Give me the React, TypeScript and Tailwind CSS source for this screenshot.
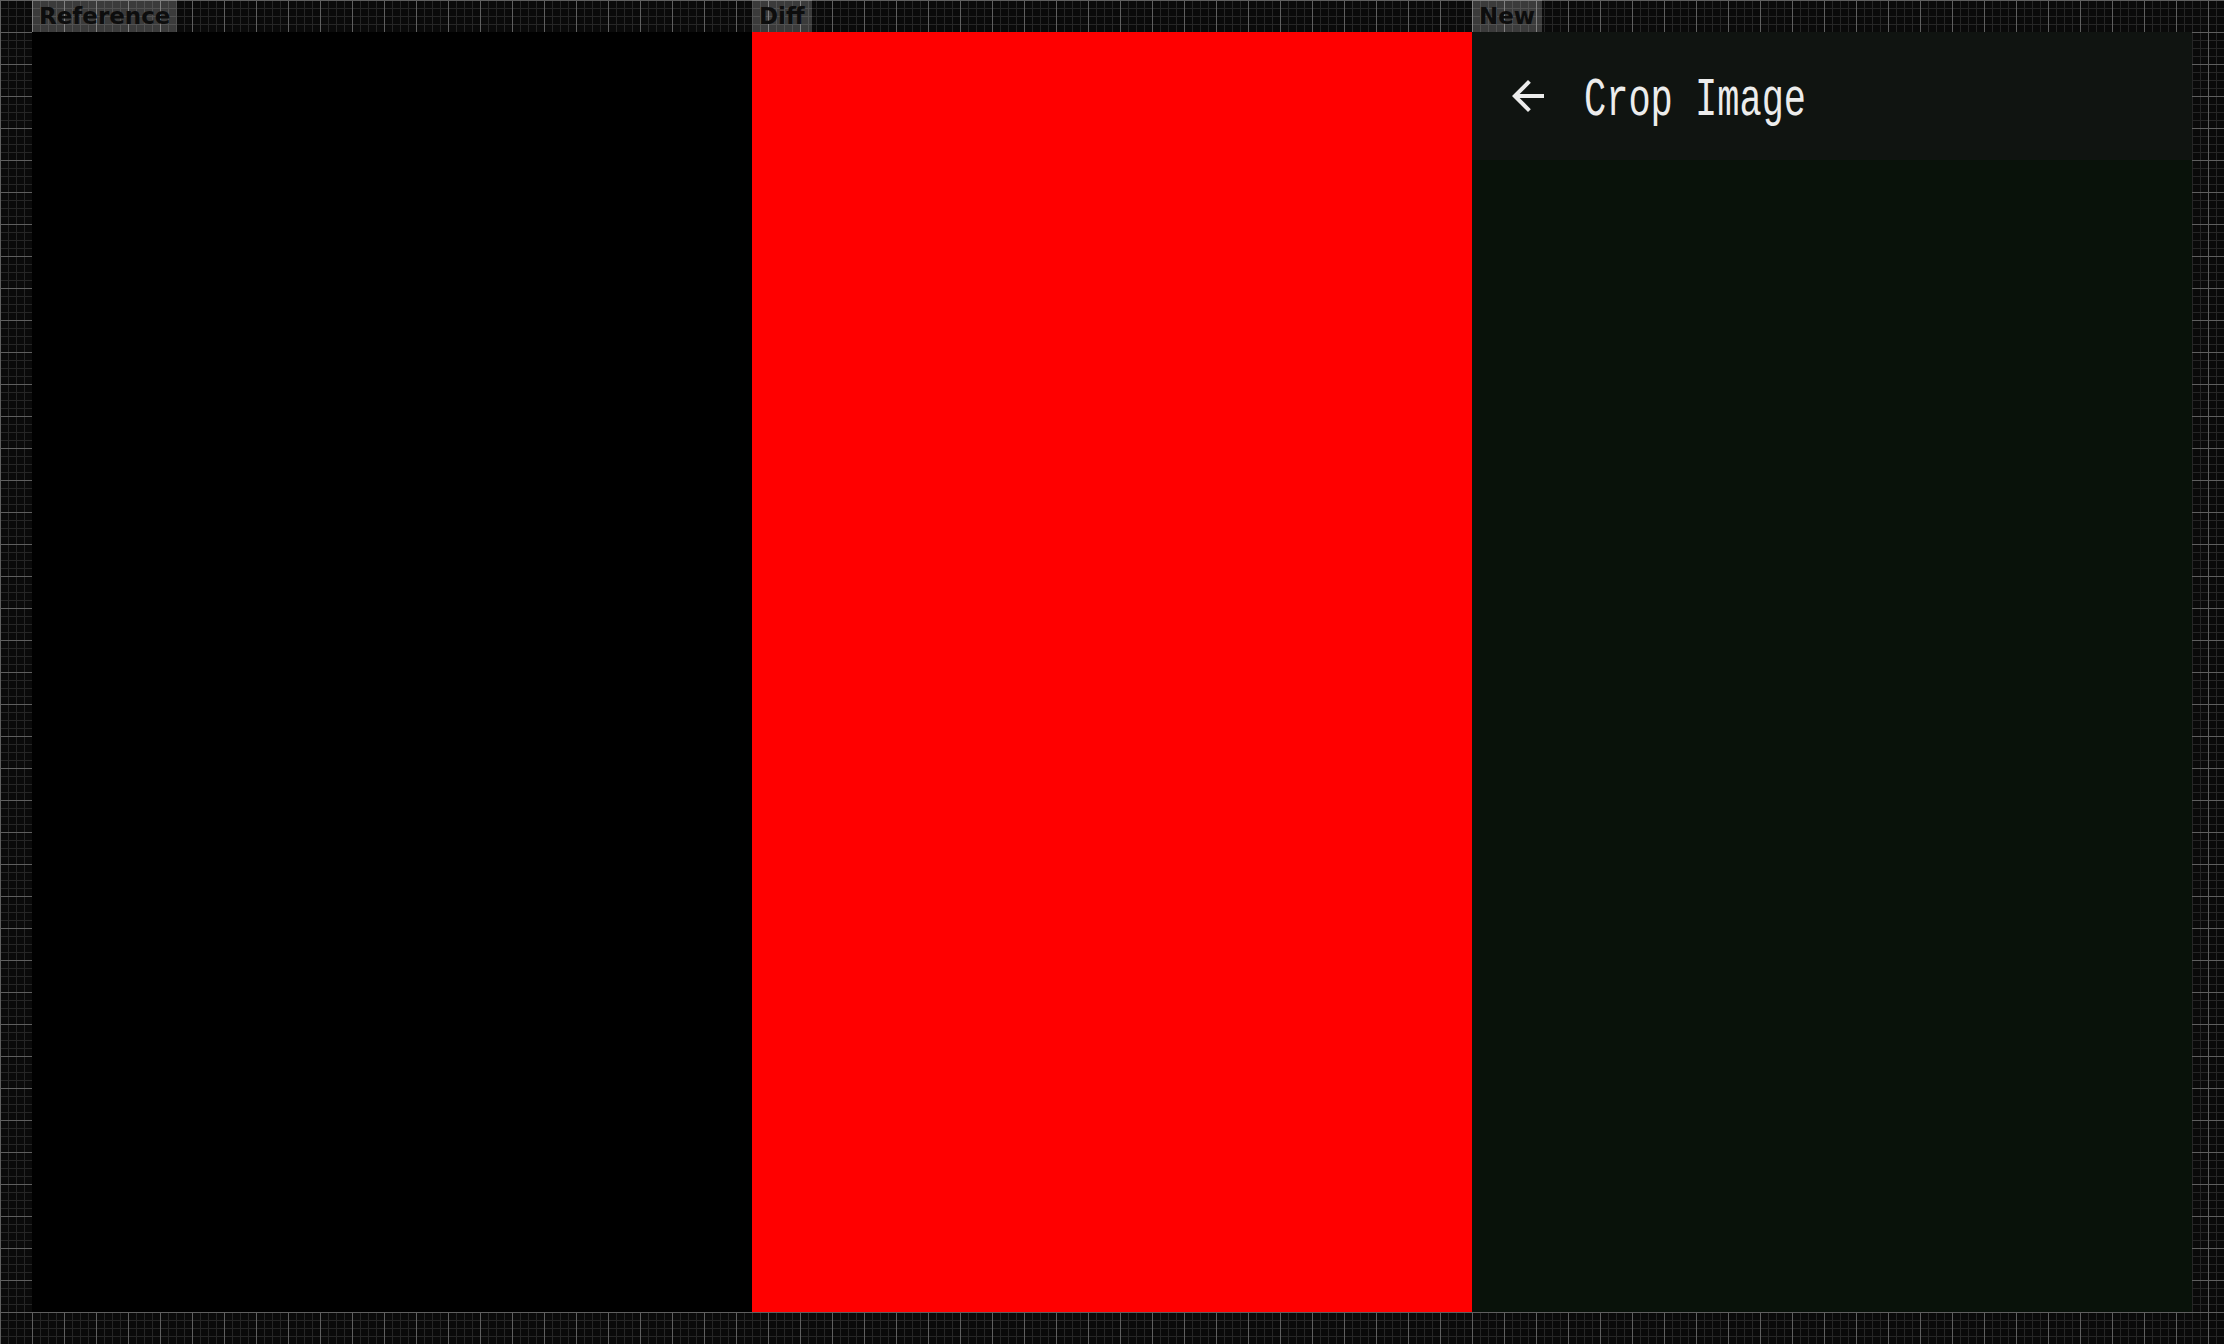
import { MdArrowBack } from "react-icons/md";

function Label({ text }: { text: string }) {
  return (
    <div className="h-8 flex items-start">
      <span className="h-8 px-[7px] bg-white/20 text-[#0d0d0d] text-[23px] leading-8 font-bold font-['DejaVu_Sans',sans-serif]">
        {text}
      </span>
    </div>
  );
}

export default function App() {
  return (
    <div className="w-[2224px] h-[1344px] overflow-hidden bg-[#0a0a0a] bg-[linear-gradient(to_right,#5f5f5f_1px,transparent_1px),linear-gradient(to_bottom,#5f5f5f_1px,transparent_1px),linear-gradient(to_right,#262626_1px,transparent_1px),linear-gradient(to_bottom,#262626_1px,transparent_1px)] [background-size:32px_32px,32px_32px,8px_8px,8px_8px]">
      <div className="flex px-8">
        {/* Reference */}
        <div className="flex flex-col w-[720px]">
          <Label text="Reference" />
          <div className="h-[1280px] bg-black" />
        </div>
        {/* Diff */}
        <div className="flex flex-col w-[720px]">
          <Label text="Diff" />
          <div className="h-[1280px] bg-[#ff0000]" />
        </div>
        {/* New */}
        <div className="flex flex-col w-[720px]">
          <Label text="New" />
          <div className="h-[1280px] flex flex-col bg-[#09120a]">
            <div className="h-32 shrink-0 bg-[#101411] flex items-center pl-8 gap-[32px]">
              <MdArrowBack size={48} className="text-[#ececec]" />
              <span className="text-[37px] leading-none text-[#ececec] font-['Liberation_Mono',monospace] scale-y-[1.45] origin-center translate-y-[5px]">
                Crop Image
              </span>
            </div>
            <div className="flex-1" />
          </div>
        </div>
      </div>
    </div>
  );
}
